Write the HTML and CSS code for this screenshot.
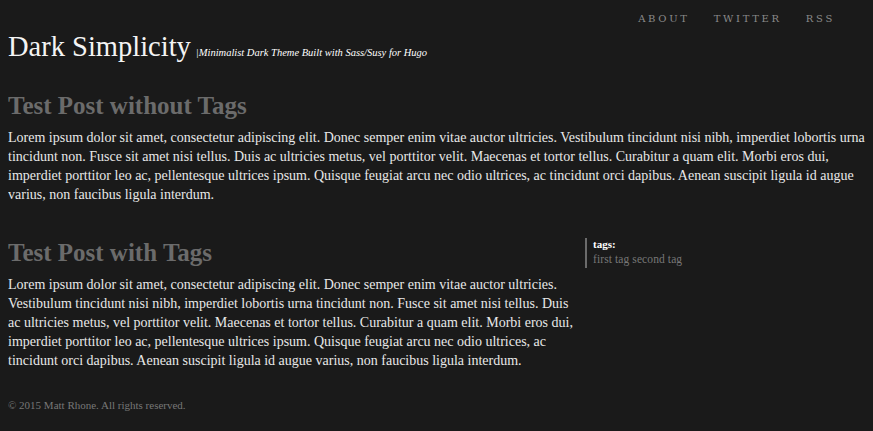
FILE: index.html
```html
<!DOCTYPE html>
<html>
<head>
<meta charset="utf-8">
<link rel="stylesheet" href="styles.css">
</head>
<body>
<header class="site-header">
  <nav class="nav">
    <a href="#">About</a>
    <a href="#">Twitter</a>
    <a href="#">RSS</a>
  </nav>
  <div class="brand">
    <h1 class="site-title">Dark Simplicity</h1>
    <span class="tagline">|Minimalist Dark Theme Built with Sass/Susy for Hugo</span>
  </div>
</header>
<main>
  <article class="post">
    <h2 class="post-title">Test Post without Tags</h2>
    <p class="post-body">Lorem ipsum dolor sit amet, consectetur adipiscing elit. Donec semper enim vitae auctor ultricies. Vestibulum tincidunt nisi nibh, imperdiet lobortis urna tincidunt non. Fusce sit amet nisi tellus. Duis ac ultricies metus, vel porttitor velit. Maecenas et tortor tellus. Curabitur a quam elit. Morbi eros dui, imperdiet porttitor leo ac, pellentesque ultrices ipsum. Quisque feugiat arcu nec odio ultrices, ac tincidunt orci dapibus. Aenean suscipit ligula id augue varius, non faucibus ligula interdum.</p>
  </article>
  <div class="post-row">
    <article class="post-main">
      <h2 class="post-title">Test Post with Tags</h2>
      <p class="post-body">Lorem ipsum dolor sit amet, consectetur adipiscing elit. Donec semper enim vitae auctor ultricies. Vestibulum tincidunt nisi nibh, imperdiet lobortis urna tincidunt non. Fusce sit amet nisi tellus. Duis ac ultricies metus, vel porttitor velit. Maecenas et tortor tellus. Curabitur a quam elit. Morbi eros dui, imperdiet porttitor leo ac, pellentesque ultrices ipsum. Quisque feugiat arcu nec odio ultrices, ac tincidunt orci dapibus. Aenean suscipit ligula id augue varius, non faucibus ligula interdum.</p>
    </article>
    <aside class="tags">
      <div class="tags-label">tags:</div>
      <div class="tags-list"><a href="#">first tag</a> <a href="#">second tag</a></div>
    </aside>
  </div>
</main>
<footer class="footer">© 2015 Matt Rhone. All rights reserved.</footer>
</body>
</html>
```
FILE: styles.css
```css
html { background: #1a1a1a; }
body {
  margin: 0 8px;
  background: #1a1a1a;
  color: #eeeeee;
  font-family: "Liberation Serif", "DejaVu Serif", serif;
}
a { text-decoration: none; color: inherit; }
.site-header { padding-top: 10px; }
.nav {
  display: flex;
  justify-content: flex-end;
  padding-right: 30px;
  height: 16px;
}
.nav a {
  font-family: "DejaVu Serif", serif;
  font-size: 10px;
  letter-spacing: 2.7px;
  text-transform: uppercase;
  color: #8a8a8a;
  margin-left: 24px;
  line-height: 17px;
}
.brand {
  display: flex;
  align-items: baseline;
  margin-top: 2px;
}
.site-title {
  margin: 0;
  font-weight: normal;
  font-size: 28.5px;
  line-height: 38px;
  color: #f4f4f4;
}
.tagline {
  font-style: italic;
  font-size: 10.5px;
  color: #ffffff;
  margin-left: 5px;
}
.post-title {
  margin: 0;
  font-weight: bold;
  font-size: 25px;
  color: #6b6b6b;
  line-height: 30px;
}
.post { margin-top: 25px; }
.post-body {
  margin: 7px 0 0;
  font-size: 14px;
  line-height: 19px;
  color: #e8e8e8;
}
.post-row {
  display: flex;
  margin-top: 34px;
}
.post-main { width: 565px; }
.tags {
  margin-left: 12px;
  border-left: 2px solid #6b6b6b;
  padding-left: 6px;
  height: 30px;
}
.tags-label { color: #fff; font-weight: bold; font-size: 11px; line-height: 13px; }
.tags-list { color: #777; font-size: 11.5px; line-height: 17px; letter-spacing: 0.1px; }
.footer {
  margin-top: 28px;
  font-size: 11px;
  line-height: 14px;
  color: #777;
}
```
